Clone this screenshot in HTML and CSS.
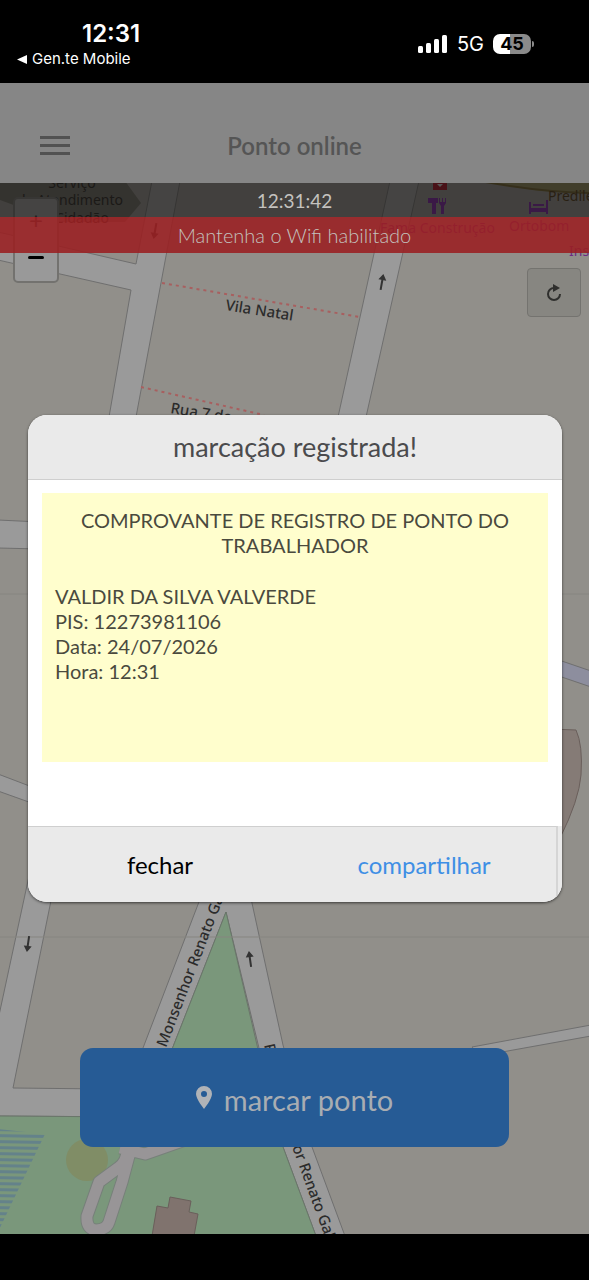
FILE: index.html
```
<!DOCTYPE html>
<html lang="pt-BR">
<head>
    <meta charset="UTF-8">
    <meta name="viewport" content="width=device-width, initial-scale=1.0">
    <title>Ponto online</title>
    <link rel="stylesheet" href="styles.css">
</head>
<body>

    <!-- Barra de status -->
    <div class="status-bar">
        <div class="status-left">
            <span class="status-time">12:31</span>
            <a href="#" class="status-back">
                <svg width="10" height="9" viewBox="0 0 10 9"><path d="M0 4.5L10 0v9z" fill="#fff"/></svg>
                Gen.te Mobile
            </a>
        </div>
        <div class="status-right">
            <svg width="30" height="20" viewBox="0 0 30 20" fill="#fff">
                <rect x="0" y="12" width="5" height="7" rx="1.5"/>
                <rect x="8" y="9" width="5" height="10" rx="1.5"/>
                <rect x="16" y="5" width="5" height="14" rx="1.5"/>
                <rect x="24" y="1" width="5" height="18" rx="1.5"/>
            </svg>
            <span class="network">5G</span>
            <span class="battery">45</span>
        </div>
    </div>

    <div class="app">
        <header class="header">
            <button type="button" class="menu-button" aria-label="Menu">
                <svg width="30" height="22" viewBox="0 0 30 22" fill="#525252">
                    <rect y="1" width="30" height="3"/>
                    <rect y="9" width="30" height="3"/>
                    <rect y="17" width="30" height="3"/>
                </svg>
            </button>
            <h1 class="title">Ponto online</h1>
        </header>

        <main class="content">
            <!-- Mapa -->
            <svg class="map" viewBox="0 183 589 1051" preserveAspectRatio="xMidYMin slice">
                <defs>
                    <pattern id="water" width="60" height="6" patternUnits="userSpaceOnUse" patternTransform="rotate(1)">
                        <rect width="60" height="3" fill="#64828a"/>
                    </pattern>
                    <path id="arrow" d="M-1 8V-2H-4L0 -8L4 -2H1V8z" fill="#333"/>
                </defs>

                <rect y="183" width="589" height="1051" fill="#918f8a"/>

                <!-- Ruas -->
                <g class="road">
                    <path d="M-2 232L136 264L152 181H180L136 417H109L131 290L-2 260z"/>
                    <path d="M390 181H419L366 417H338z"/>
                    <path d="M-2 520L40 522V549L-2 548z"/>
                    <path d="M-2 774L40 790V806L-2 791z"/>
                    <path d="M550 657L591 671V687L550 673z" class="stream"/>
                    <path d="M29 876L-2 1020V1116L290 1118V1091L13 1088L56 876z"/>
                    <path d="M202 894L120 1108L145 1118L226 912L283 1147L316 1236H345L312 1147L283 1045L250 894z"/>
                    <path d="M472 1047L591 1025V1036L480 1056z"/>
                </g>

                <!-- Praça -->
                <path d="M226 912L145 1118H274z" class="park"/>
                <path d="M-2 1116L272 1118L283 1147L316 1236H-2z" class="park"/>
                <path d="M-2 1129L45 1134L-2 1232z" fill="url(#water)"/>
                <circle cx="87" cy="1160" r="21" fill="#808d66"/>
                <g class="footpath">
                    <path class="footpath-edge" d="M120 1148L145 1154L185 1140M127 1150Q127 1162 118 1168L99 1182L87 1216Q86 1230 97 1230Q107 1229 109 1222L122 1182L130 1152"/>
                    <path class="footpath-fill" d="M120 1148L145 1154L185 1140M127 1150Q127 1162 118 1168L99 1182L87 1216Q86 1230 97 1230Q107 1229 109 1222L122 1182L130 1152"/>
                </g>
                <path d="M152 1236L157 1206L168 1208L170 1197L191 1201L189 1212L198 1214L194 1236z" class="building"/>
                <path d="M550 729L576 730Q583 745 581 775Q579 800 560 838z" class="building building-light"/>

                <!-- Limites e divisas dos quadros -->
                <path d="M162 283L360 317M141 387L264 415" class="boundary"/>
                <path d="M0 594H589M0 937H589" class="tile-edge"/>

                <!-- Sentido das ruas -->
                <use href="#arrow" transform="translate(155 231) rotate(190)"/>
                <use href="#arrow" transform="translate(382 282) rotate(10)"/>
                <use href="#arrow" transform="translate(28 944) rotate(188)"/>
                <use href="#arrow" transform="translate(250 959) rotate(-8)"/>

                <!-- Pontos de interesse -->
                <path d="M0 181H125L141 203L125 222H60L0 200z" fill="#6b6962"/>
                <path d="M480 181L540 191L589 193V181z" fill="#8f8757"/>
                <path d="M480 181Q540 192 591 193" fill="none" stroke="#6e5f2b" stroke-width="2"/>
                <rect x="433" y="178" width="14" height="12" fill="#a30f22"/>
                <path d="M437 184L440 187L443 184z" fill="#ccc"/>
                <path d="M428 198V203H432V214H436V203H438V198zM439 198V203L441 206V214H444V206L446 203V198H445V202H443V198H442V202H440V198z" fill="#7a22a0"/>
                <path d="M529 202H531V208H546V200H548V214H546V212H531V214H529zM533 204H544V206H533z" fill="#7a22a0"/>

                <g class="poi" text-anchor="middle">
                    <text x="72" y="188">Serviço</text>
                    <text x="70" y="205">de Atendimento</text>
                    <text x="72" y="223">ao Cidadão</text>
                </g>
                <g class="poi poi-shop">
                    <text x="380" y="233">Fama Construção</text>
                    <text x="509" y="231">Ortobom</text>
                    <text x="569" y="256">Insta</text>
                </g>
                <text x="548" y="201" class="poi poi-place">Predileta</text>

                <g class="street">
                    <text transform="translate(225 310) rotate(9)">Vila Natal</text>
                    <text transform="translate(170 413) rotate(9)">Rua 7 de</text>
                    <text transform="translate(166 1048) rotate(-69)">Monsenhor Renato Galvão</text>
                    <text transform="translate(264 1045) rotate(77)">R</text>
                    <text transform="translate(292 1147) rotate(70)">or Renato Galvão</text>
                    <text x="481" y="1058">33</text>
                </g>
            </svg>

            <div class="zoom-control">
                <button type="button" aria-label="Aumentar zoom">+</button>
                <button type="button" aria-label="Diminuir zoom"><span class="minus"></span></button>
            </div>

            <div class="clock">12:31:42</div>
            <div class="alert">Mantenha o Wifi habilitado</div>

            <button type="button" class="refresh-button" aria-label="Atualizar">
                <svg width="16" height="20" viewBox="0 0 16 20">
                    <path d="M9 5H8A6 6 0 1 0 14 11" fill="none" stroke="#2f2f2d" stroke-width="2"/>
                    <path d="M7 1L14 5L7 9z" fill="#2f2f2d"/>
                </svg>
            </button>

            <button type="button" class="punch-button">
                <svg width="16" height="23" viewBox="0 0 16 23">
                    <path d="M8 0A8 8 0 0 0 0 8C0 13 8 23 8 23S16 13 16 8A8 8 0 0 0 8 0zM8 5A3 3 0 1 1 8 11A3 3 0 1 1 8 5z" fill="#b0b3b7" fill-rule="evenodd"/>
                </svg>
                <span>marcar ponto</span>
            </button>
        </main>

        <!-- Comprovante -->
        <div class="overlay">
            <div class="modal" role="dialog" aria-labelledby="modalTitle">
                <h2 class="modal-title" id="modalTitle">marcação registrada!</h2>
                <div class="modal-body">
                    <div class="receipt">
                        <p class="receipt-title">COMPROVANTE DE REGISTRO DE PONTO DO TRABALHADOR</p>
                        <p>VALDIR DA SILVA VALVERDE</p>
                        <p>PIS: 12273981106</p>
                        <p>Data: 24/07/2026</p>
                        <p>Hora: 12:31</p>
                    </div>
                </div>
                <div class="modal-actions">
                    <button type="button">fechar</button>
                    <button type="button" class="share">compartilhar</button>
                </div>
            </div>
        </div>
    </div>

    <div class="bottom-bar"></div>

</body>
</html>
```
FILE: styles.css
```
* {
    box-sizing: border-box;
}

body {
    margin: 0;
    min-height: 100vh;
    display: flex;
    flex-direction: column;
    background-color: #000;
    font-family: Lato, sans-serif;
    overflow-x: hidden;
}

button {
    margin: 0;
    padding: 0;
    border: none;
    background: none;
    font-family: inherit;
    cursor: pointer;
}

h1, h2, p {
    margin: 0;
    font-weight: normal;
}

/* Barra de status */
.status-bar {
    display: flex;
    justify-content: space-between;
    height: 83px;
    padding: 20px 58px 0 17px;
    color: white;
    font-family: Inter, sans-serif;
}

.status-left {
    display: flex;
    flex-direction: column;
}

.status-time {
    padding-left: 65px;
    font-size: 24px;
    line-height: 28px;
    font-weight: 600;
}

.status-back {
    display: flex;
    align-items: center;
    gap: 5px;
    color: white;
    font-size: 15px;
    line-height: 22px;
    text-decoration: none;
}

.status-right {
    display: flex;
    align-items: center;
    gap: 9px;
    height: 48px;
}

.network {
    font-size: 20px;
}

.battery {
    position: relative;
    width: 38px;
    border-radius: 7px;
    background: linear-gradient(to right, #fff 45%, #8a8a8a 45%);
    color: black;
    font-size: 18px;
    line-height: 20px;
    font-weight: 700;
    text-align: center;
}

.battery::after {
    content: "";
    position: absolute;
    top: 7px;
    right: -3px;
    width: 2px;
    height: 6px;
    border-radius: 0 2px 2px 0;
    background-color: #8a8a8a;
}

.app {
    position: relative;
    flex: 1;
    display: flex;
    flex-direction: column;
}

.header {
    display: grid;
    grid-template-columns: 30px 1fr 30px;
    align-items: center;
    height: 100px;
    padding: 26px 40px 0;
    background-color: #868686;
}

.menu-button {
    display: flex;
}

.title {
    color: #555;
    font-size: 24px;
    line-height: 28px;
    font-weight: 600;
    text-align: center;
}

.content {
    position: relative;
    flex: 1;
    display: flex;
    flex-direction: column;
    overflow: hidden;
}

/* Mapa */
.map {
    position: absolute;
    top: 0;
    left: 0;
    width: 100%;
    height: 100%;
    font-family: "Noto Sans", sans-serif;
}

.road {
    fill: #9a9a9a;
    stroke: #6f6f6f;
    stroke-width: 1;
}

.road .stream {
    fill: #8d8e9e;
}

.park {
    fill: #7a977b;
    stroke: #6a766a;
    stroke-width: 1;
}

.footpath path {
    fill: none;
    stroke-linejoin: round;
}

.footpath .footpath-edge {
    stroke: #77807a;
    stroke-width: 13;
}

.footpath .footpath-fill {
    stroke: #989597;
    stroke-width: 11;
}

.building {
    fill: #80736e;
    stroke: #6a5f5b;
    stroke-width: 1;
}

.building-light {
    fill: #857b76;
}

.boundary {
    fill: none;
    stroke: #a85f5f;
    stroke-width: 2;
    stroke-dasharray: 3 4;
}

.tile-edge {
    stroke: #868580;
    stroke-width: 1;
}

.poi {
    fill: #26241f;
    font-size: 14px;
}

.poi-shop {
    fill: #6d2b84;
}

.poi-place {
    fill: #4c3512;
}

.street {
    fill: #2b2b2b;
    font-size: 15px;
    font-weight: 500;
}

.zoom-control {
    position: absolute;
    top: 14px;
    left: 13px;
    width: 46px;
    border: 2px solid #73726f;
    border-radius: 5px;
    background-color: #999;
}

.zoom-control button {
    display: flex;
    align-items: center;
    justify-content: center;
    width: 100%;
    height: 41px;
    color: #333;
    font-size: 24px;
}

.zoom-control .minus {
    width: 16px;
    height: 3px;
    margin-bottom: 6px;
    border-radius: 2px;
    background-color: black;
}

.clock, .alert {
    position: relative;
    color: #c4c2bf;
    text-align: center;
}

.clock {
    height: 34px;
    font-size: 19px;
    line-height: 35px;
    background-color: rgba(22, 20, 18, 0.64);
}

.alert {
    height: 36px;
    font-size: 20px;
    font-weight: 300;
    line-height: 37px;
    background-color: rgba(154, 31, 33, 0.88);
}

.refresh-button {
    position: relative;
    display: flex;
    align-items: center;
    justify-content: center;
    align-self: flex-end;
    width: 54px;
    height: 49px;
    margin: 15px 8px 0 0;
    border: 1px solid #74736f;
    border-radius: 4px;
    background-color: #878681;
}

.punch-button {
    position: relative;
    display: flex;
    align-items: center;
    justify-content: center;
    gap: 12px;
    width: 73%;
    height: 99px;
    margin: auto auto 87px;
    border-radius: 13px;
    background-color: #265b95;
    color: #a9adb2;
    font-size: 29px;
}

.punch-button span {
    padding-top: 4px;
}

/* Comprovante */
.overlay {
    position: absolute;
    top: 0;
    right: 0;
    bottom: 0;
    left: 0;
    display: flex;
    align-items: center;
    padding: 0 27px 0 28px;
}

.modal {
    flex: 1;
    border-radius: 19px;
    background-color: white;
    box-shadow: 0 1px 3px rgba(0, 0, 0, 0.6);
    overflow: hidden;
}

.modal-title {
    border-bottom: 1px solid #cfcfcf;
    background-color: #eaeaea;
    color: #4b4b4d;
    font-size: 27px;
    line-height: 64px;
    text-align: center;
}

.modal-body {
    padding: 13px 14px 64px;
}

.receipt {
    min-height: 269px;
    padding: 15px 13px;
    background-color: #fffecd;
    color: #4a4a3e;
    font-size: 20px;
    line-height: 25px;
}

.receipt-title {
    margin-bottom: 26px;
    text-align: center;
}

.modal-actions {
    display: flex;
    padding-right: 4px;
    background-color: #eaeaea;
}

.modal-actions button {
    flex: 1;
    height: 76px;
    border-top: 1px solid #cfcfcf;
    color: black;
    font-size: 24px;
}

.modal-actions .share {
    border-right: 2px solid #d5d5d5;
    color: #3f8fe5;
}

.bottom-bar {
    height: 46px;
    background-color: black;
}
```
